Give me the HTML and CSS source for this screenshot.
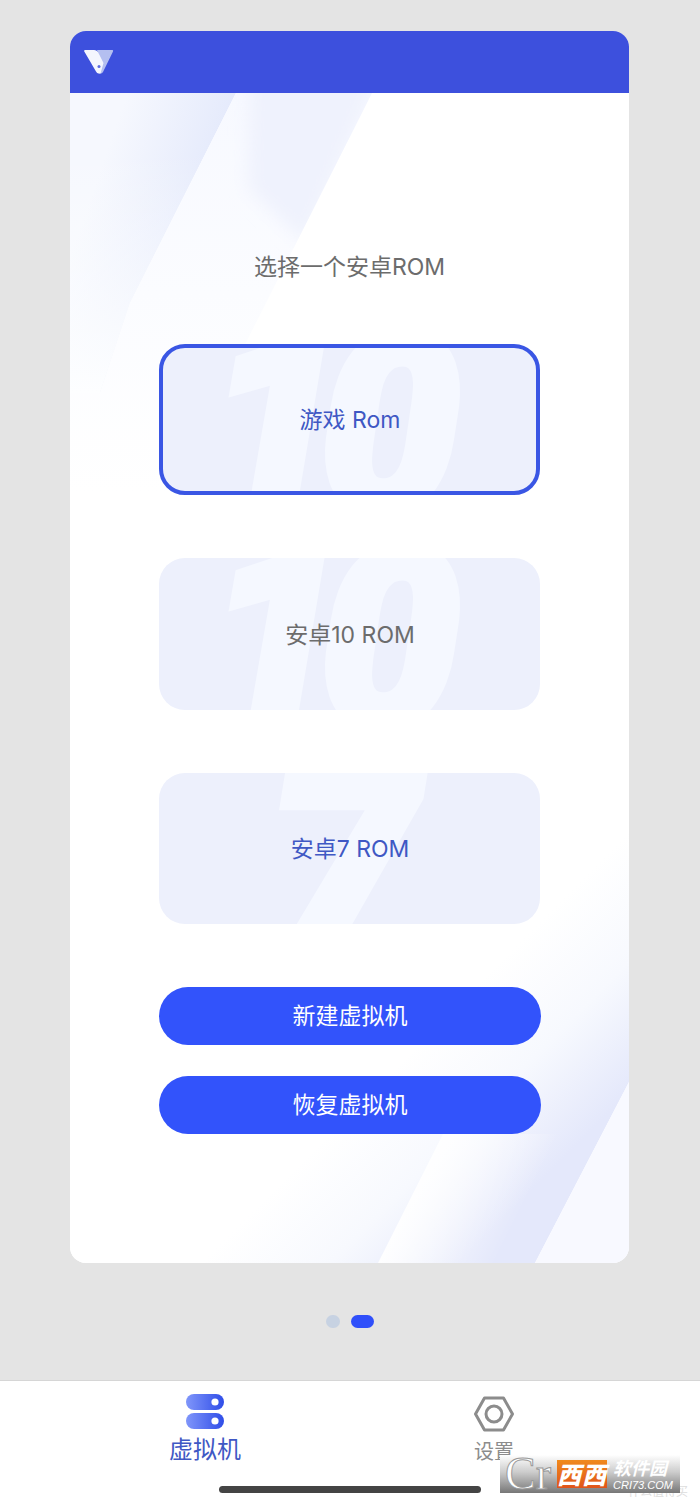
FILE: index.html
```html
<!DOCTYPE html>
<html lang="en">
<head>
    <meta charset="UTF-8">
    <meta name="viewport" content="width=device-width, initial-scale=1.0">
    <title>虚拟机</title>
    <link rel="stylesheet" href="styles.css">
</head>
<body>
    <main class="page">
        <section class="panel">
            <header class="panel-head">
                <svg class="logo" width="30" height="24" viewBox="0 0 30 24">
                    <path d="M13 0H28.500Q29.500 0 29 1.500L19 22Q18 23.500 16.500 23.500H15L17 12Z" fill="#b4bff0"/>
                    <path d="M0 1Q0 0 1.500 0H10Q13 0 14.500 3L19.500 13L16.500 23.500H14.500Q13 23.500 12 21.500Z" fill="#f4f6fe"/>
                    <circle cx="15" cy="16.500" r="1.500" fill="#5a6bdf"/>
                </svg>
            </header>
            <div class="panel-body">
                <!-- background art -->
                <svg class="panel-art" width="559" height="1170" viewBox="0 0 559 1170">
                    <defs>
                        <clipPath id="clipA"><path d="M0 0H166L60 210L30 300H0Z"/></clipPath>
                        <clipPath id="clipB"><path d="M166 0H302L100 400H0V300H30L60 210Z"/></clipPath>
                        <clipPath id="clipD"><path d="M559 700V989L465 1170H0V700Z"/></clipPath>
                        <filter id="soft" x="-30%" y="-30%" width="160%" height="160%"><feGaussianBlur stdDeviation="9"/></filter>
                        <linearGradient id="artA" x1="165" y1="60" x2="50" y2="20" gradientUnits="userSpaceOnUse">
                            <stop offset="0" stop-color="#e2e8fb"/>
                            <stop offset="1" stop-color="#f6f8fe"/>
                        </linearGradient>
                        <linearGradient id="fadeA" x1="0" y1="60" x2="0" y2="300" gradientUnits="userSpaceOnUse">
                            <stop offset="0" stop-color="#fdfeff" stop-opacity="0"/>
                            <stop offset="1" stop-color="#fdfeff"/>
                        </linearGradient>
                        <linearGradient id="artB" x1="0" y1="0" x2="0" y2="400" gradientUnits="userSpaceOnUse">
                            <stop offset="0" stop-color="#f7f9ff"/>
                            <stop offset="1" stop-color="#fff"/>
                        </linearGradient>
                        <linearGradient id="artD" x1="340" y1="960" x2="470" y2="1089" gradientUnits="userSpaceOnUse">
                            <stop offset="0" stop-color="#fff"/>
                            <stop offset="0.5" stop-color="#f7f9fe"/>
                            <stop offset="1" stop-color="#e4e8fb"/>
                        </linearGradient>
                        <linearGradient id="artE" x1="330" y1="1110" x2="430" y2="1160" gradientUnits="userSpaceOnUse">
                            <stop offset="0" stop-color="#fff"/>
                            <stop offset="1" stop-color="#fff" stop-opacity="0"/>
                        </linearGradient>
                    </defs>
                    <g clip-path="url(#clipA)">
                        <rect width="170" height="300" fill="url(#artA)"/>
                        <rect width="170" height="300" fill="url(#fadeA)"/>
                    </g>
                    <g clip-path="url(#clipB)">
                        <rect x="0" width="302" height="400" fill="url(#artB)"/>
                        <path d="M180 -20H310L235 150L178 95Z" fill="#eff2fd" filter="url(#soft)"/>
                    </g>
                    <g clip-path="url(#clipD)">
                        <rect x="0" y="700" width="559" height="470" fill="url(#artD)"/>
                        <path d="M373 1041L308 1170H465L530 1041Z" fill="url(#artE)"/>
                    </g>
                    <path d="M559 989V1170H465Z" fill="#f8f9ff"/>
                </svg>
                <h1 class="title">选择一个安卓ROM</h1>
                <div class="rom-list">
                    <div class="rom rom-active">
                        <span class="rom-num">10</span>
                        <span class="rom-name blue">游戏 Rom</span>
                    </div>
                    <div class="rom">
                        <span class="rom-num">10</span>
                        <span class="rom-name">安卓10 ROM</span>
                    </div>
                    <div class="rom rom-last">
                        <span class="rom-num seven">7</span>
                        <span class="rom-name blue">安卓7 ROM</span>
                    </div>
                </div>
                <div class="actions">
                    <div class="action">新建虚拟机</div>
                    <div class="action">恢复虚拟机</div>
                </div>
            </div>
        </section>
        <div class="pager">
            <span class="dot"></span>
            <span class="dot dot-on"></span>
        </div>
    </main>
    <nav class="tabbar">
        <div class="tab tab-on">
            <svg width="38" height="36" viewBox="0 0 38 36">
                <defs>
                    <linearGradient id="pill" x1="0" y1="0" x2="1" y2="0">
                        <stop offset="0" stop-color="#8096fa"/>
                        <stop offset="1" stop-color="#2f4de8"/>
                    </linearGradient>
                </defs>
                <rect x="0" y="0" width="38" height="16" rx="8" fill="url(#pill)"/>
                <rect x="0" y="19" width="38" height="16" rx="8" fill="url(#pill)"/>
                <circle cx="29" cy="8" r="3.600" fill="#fff"/>
                <circle cx="29" cy="27" r="3.600" fill="#fff"/>
            </svg>
            <span>虚拟机</span>
        </div>
        <div class="tab">
            <svg class="nut" width="40" height="36" viewBox="0 0 40 36" fill="none" stroke="#8c8c8c">
                <path d="M10.500 2H29.500L38.500 18L29.500 34H10.500L1.500 18Z" stroke-width="3" stroke-linejoin="round"/>
                <circle cx="20" cy="18" r="8" stroke-width="3"/>
            </svg>
            <span class="tab-small">设置</span>
        </div>
        <div class="home-bar"></div>
        <div class="faint">什么值得买</div>
        <div class="stamp">
            <span class="stamp-cr">Cr</span>
            <span class="stamp-xx">西西</span>
            <span class="stamp-site">
                <b>软件园</b>
                <i>CRI73.COM</i>
            </span>
        </div>
    </nav>
</body>
</html>
```

FILE: styles.css
```css
* {
    margin: 0;
    padding: 0;
    box-sizing: border-box;
    font-family: Inter, "Noto Sans CJK SC", sans-serif;
}

body {
    width: 700px;
    height: 1503px;
    overflow: hidden;
    background-color: #e4e4e4;
}

.page {
    height: 1380px;
    padding: 31px 71px 0 70px;
}

.panel {
    height: 1232px;
    border-radius: 16px;
    overflow: hidden;
    background-color: #fff;
}

.panel-head {
    height: 62px;
    padding: 19px 0 0 14px;
    background-color: #3d50dd;
}

.logo {
    display: block;
}

.panel-body {
    position: relative;
    height: 1170px;
    padding: 158px 89px 0 89px;
}

.panel-art {
    position: absolute;
    top: 0;
    left: 0;
}

.title {
    position: relative;
    height: 32px;
    line-height: 32px;
    text-align: center;
    font-size: 23px;
    font-weight: 400;
    color: #6c6c6c;
}

.rom-list {
    position: relative;
    display: flex;
    flex-direction: column;
    gap: 63px;
    margin-top: 61px;
}

.rom {
    position: relative;
    height: 152px;
    padding: 0 0 3px 1px;
    border-radius: 26px;
    overflow: hidden;
    display: flex;
    justify-content: center;
    align-items: center;
    background-color: #edf0fc;
}

.rom-active {
    height: 151px;
    border: 4px solid #3a56e4;
}

.rom-last {
    height: 151px;
}

.rom-num {
    position: absolute;
    top: -43px;
    left: 47px;
    font-family: Roboto, sans-serif;
    font-size: 250px;
    line-height: 250px;
    font-weight: 900;
    font-style: italic;
    letter-spacing: -27px;
    color: #f5f8ff;
    -webkit-text-stroke: 8px #f5f8ff;
}

.rom-active .rom-num {
    top: -47px;
    left: 43px;
}

.rom .seven {
    top: -36px;
    left: 106px;
    font-size: 270px;
    line-height: 270px;
    letter-spacing: 0;
}

.rom-name {
    position: relative;
    font-size: 23px;
    color: #6c6c6c;
}

.rom-name.blue {
    color: #3f58c4;
}

.actions {
    position: relative;
    display: flex;
    flex-direction: column;
    gap: 31px;
    margin-top: 63px;
    margin-right: -1px;
}

.action {
    height: 58px;
    line-height: 58px;
    border-radius: 29px;
    text-align: center;
    font-size: 23px;
    color: #fff;
    background-color: #3253fb;
}

.pager {
    display: flex;
    align-items: center;
    justify-content: center;
    gap: 11px;
    margin-top: 52px;
    height: 13px;
    padding-left: 1px;
}

.dot {
    width: 14px;
    height: 13px;
    border-radius: 7px;
    background-color: #c7d2e2;
}

.dot-on {
    width: 23px;
    background-color: #2f4ffa;
}

.tabbar {
    position: relative;
    height: 123px;
    display: flex;
    gap: 169px;
    padding: 13px 0 0 145px;
    border-top: 1px solid #d6d6d6;
    background-color: #fff;
}

.tab {
    width: 120px;
    display: flex;
    flex-direction: column;
    align-items: center;
    gap: 4px;
    font-size: 24px;
    line-height: 32px;
    color: #8c8c8c;
}

.tab-on {
    color: #3f58c4;
}

.nut {
    margin-top: 2px;
}

.tab-small {
    font-size: 20px;
}

.home-bar {
    position: absolute;
    left: 219px;
    top: 105px;
    width: 262px;
    height: 7px;
    border-radius: 4px;
    background-color: #444;
}

.faint {
    position: absolute;
    left: 628px;
    top: 101px;
    font-size: 12px;
    color: #ddd;
}

/* site stamp, bottom right */
.stamp {
    position: absolute;
    left: 500px;
    top: 74px;
    width: 180px;
    height: 38px;
    padding-left: 5px;
    display: flex;
    align-items: center;
    gap: 2px;
    overflow: hidden;
    background: linear-gradient(#fff 0%, #ccc 45%, #777 100%);
}

.stamp-cr {
    width: 50px;
    font-family: "Liberation Serif", serif;
    font-size: 46px;
    line-height: 38px;
    color: #fff;
    -webkit-text-stroke: 1px #999;
}

.stamp-xx {
    font-family: "Noto Sans CJK SC", sans-serif;
    font-size: 24px;
    line-height: 28px;
    font-weight: 900;
    font-style: italic;
    letter-spacing: 1px;
    color: #fff;
    background: linear-gradient(#f08a1e, #e0541a);
}

.stamp-site {
    display: flex;
    flex-direction: column;
    padding-left: 4px;
    color: #fff;
}

.stamp-site b {
    font-size: 18px;
    line-height: 21px;
    font-style: italic;
}

.stamp-site i {
    font-family: "Liberation Sans", sans-serif;
    font-size: 11px;
    line-height: 12px;
}
```
